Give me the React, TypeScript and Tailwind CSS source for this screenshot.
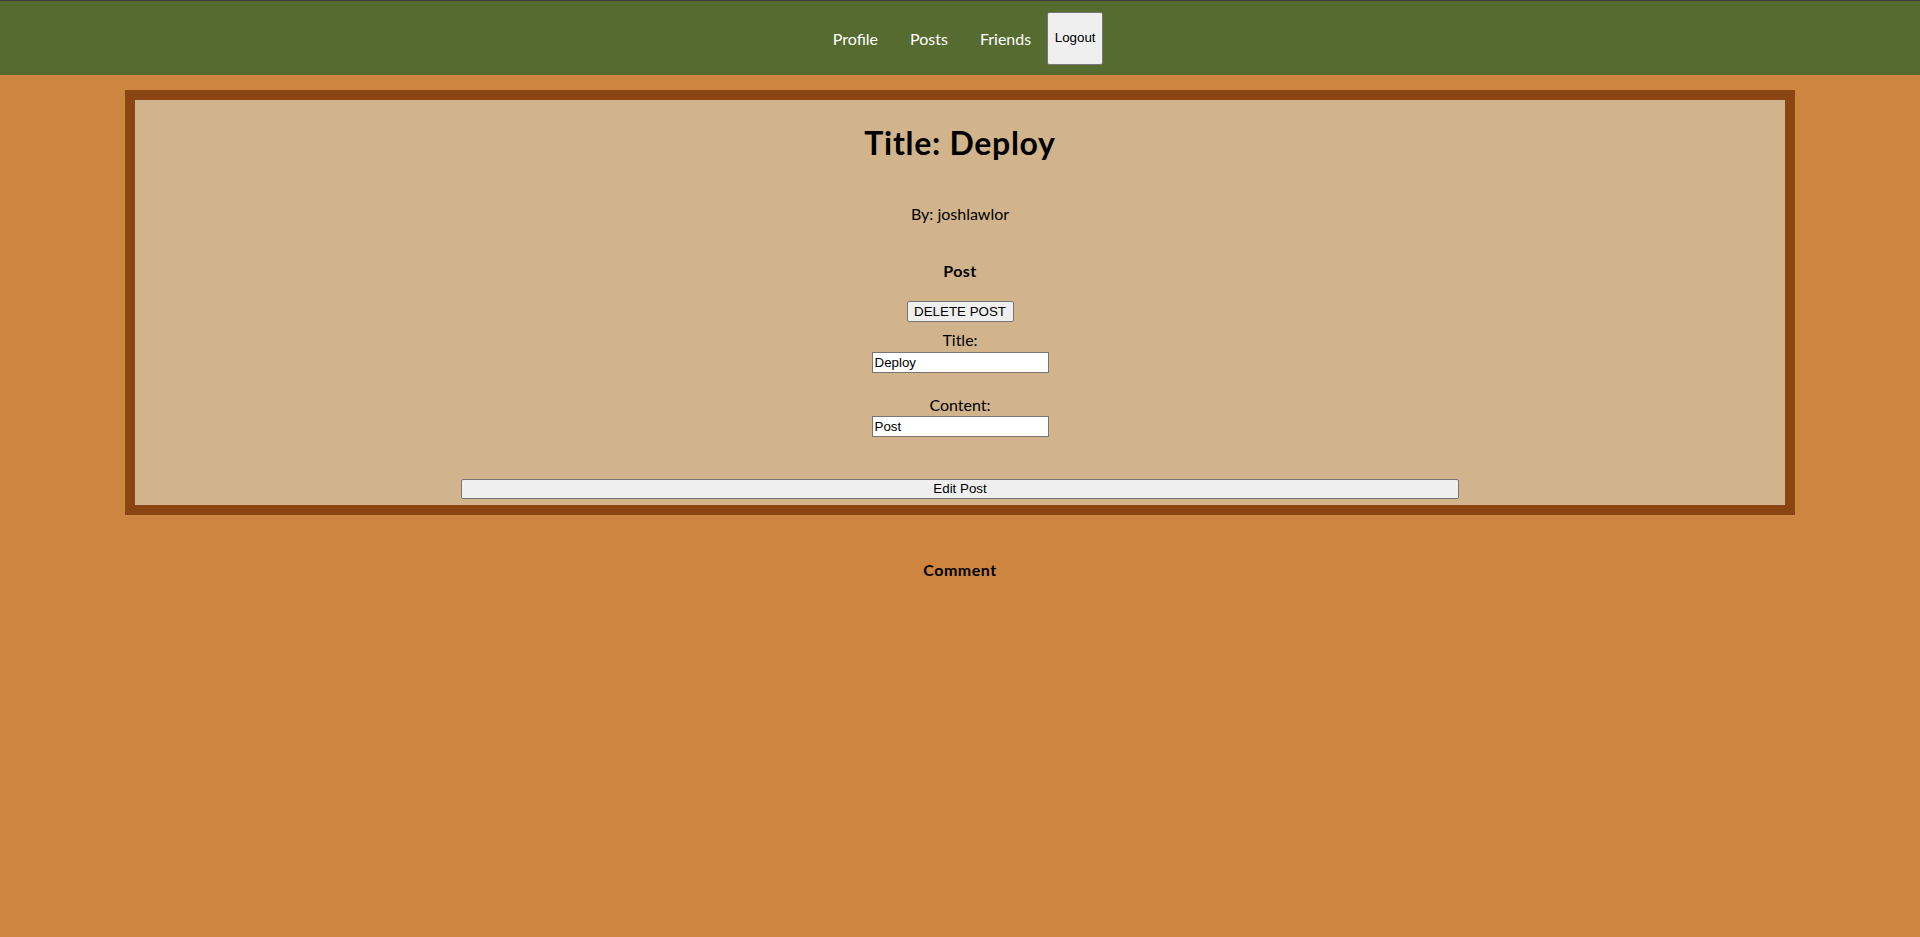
import React from "react";

const sans = "font-['Lato','Noto_Sans',sans-serif]";

export default function App() {
  return (
    <div className={`min-h-[937px] bg-[#cd853f] text-black ${sans}`}>
      <div className="h-px bg-[#3b3b40]" />
      <nav className="flex h-[74px] items-center justify-center bg-[#556b2f]">
        <div className="flex items-center">
          <a className="px-4 text-[16px] leading-[21px] text-white">Profile</a>
          <a className="px-4 text-[16px] leading-[21px] text-white">Posts</a>
          <a className="px-4 text-[16px] leading-[21px] text-white">Friends</a>
          <button className="h-[53px] w-[56px] rounded-[2px] border border-[#767676] bg-[#efefef] font-['Liberation_Sans',Arial,sans-serif] text-[13.33px] text-black">
            Logout
          </button>
        </div>
      </nav>
      <div className="mx-[125px] mt-[15px] flex flex-col items-center border-[10px] border-[#8b4513] bg-[#d2b48c]">
        <h1 className="mt-[21px] text-[32px] font-bold leading-[43px] tracking-[0.7px]">Title: Deploy</h1>
        <p className="mt-[39px] text-[16px] leading-[21px]">By: joshlawlor</p>
        <p className="mt-[36px] text-[16px] font-bold leading-[21px] tracking-[0.4px]">Post</p>
        <button className="mt-[20px] h-[21px] w-[107px] rounded-[2px] border border-[#767676] bg-[#efefef] font-['Liberation_Sans',Arial,sans-serif] text-[13.33px] leading-[19px] text-black">
          DELETE POST
        </button>
        <label className="mt-[7px] text-[16px] leading-[21px]">Title:</label>
        <input
          readOnly
          value="Deploy"
          className="mt-[2px] h-[21px] w-[177px] border border-[#767676] bg-white px-[2px] font-['Liberation_Sans',Arial,sans-serif] text-[13.33px] text-black outline-none"
        />
        <label className="mt-[21px] text-[16px] leading-[21px]">Content:</label>
        <input
          readOnly
          value="Post"
          className="mt-[1px] h-[21px] w-[177px] border border-[#767676] bg-white px-[2px] font-['Liberation_Sans',Arial,sans-serif] text-[13.33px] text-black outline-none"
        />
        <button className="mb-[6px] mt-[42px] h-[20px] w-[998px] rounded-[2px] border border-[#767676] bg-[#efefef] font-['Liberation_Sans',Arial,sans-serif] text-[13.33px] leading-[18px] text-black">
          Edit Post
        </button>
      </div>
      <p className="mt-[44px] text-center text-[16px] font-bold leading-[21px] tracking-[0.5px]">Comment</p>
    </div>
  );
}
